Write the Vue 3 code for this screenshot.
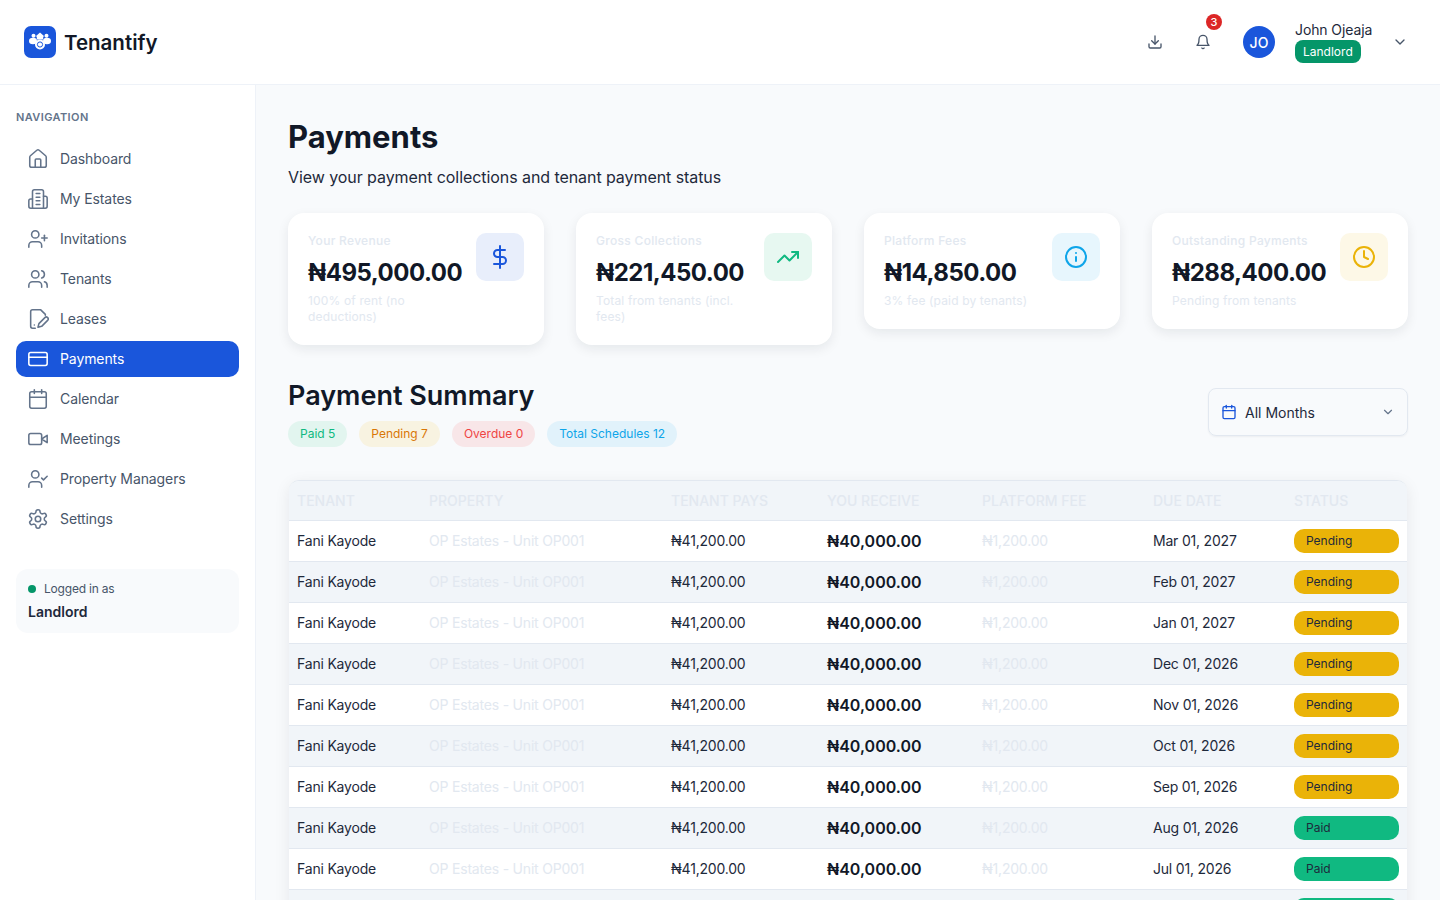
<script setup>
const c = (x, y, r) => `M${x - r} ${y}a${r} ${r} 0 1 0 ${2 * r} 0a${r} ${r} 0 1 0 ${-2 * r} 0`
const person = 'M16 21v-2a4 4 0 0 0-4-4H6a4 4 0 0 0-4 4v2'
const icons = {
  home: ['M15 21v-8a1 1 0 0 0-1-1h-4a1 1 0 0 0-1 1v8', 'M3 10a2 2 0 0 1 .709-1.528l7-5.999a2 2 0 0 1 2.582 0l7 5.999A2 2 0 0 1 21 10v9a2 2 0 0 1-2 2H5a2 2 0 0 1-2-2z'],
  building: ['M6 22V4a2 2 0 0 1 2-2h8a2 2 0 0 1 2 2v18Z', 'M6 12H4a2 2 0 0 0-2 2v6a2 2 0 0 0 2 2h2', 'M18 9h2a2 2 0 0 1 2 2v9a2 2 0 0 1-2 2h-2', 'M10 6h4', 'M10 10h4', 'M10 14h4', 'M10 18h4'],
  userPlus: [person, c(9, 7, 4), 'M19 8v6', 'M22 11h-6'],
  users: [person, c(9, 7, 4), 'M22 21v-2a4 4 0 0 0-3-3.87', 'M16 3.13a4 4 0 0 1 0 7.75'],
  file: ['M9 22H6a2 2 0 0 1-2-2V4a2 2 0 0 1 2-2h9l5 5v1', 'M8 18.500h.01', 'M19.500 10.500a2 2 0 0 1 3 3L16 20l-4 1 1-4z'],
  card: ['M4 5h16a2 2 0 0 1 2 2v10a2 2 0 0 1-2 2H4a2 2 0 0 1-2-2V7a2 2 0 0 1 2-2z', 'M2 10h20'],
  calendar: ['M5 4h14a2 2 0 0 1 2 2v14a2 2 0 0 1-2 2H5a2 2 0 0 1-2-2V6a2 2 0 0 1 2-2z', 'M16 2v4', 'M8 2v4', 'M3 10h18'],
  video: ['m22 8-6 4 6 4V8Z', 'M4 6h10a2 2 0 0 1 2 2v8a2 2 0 0 1-2 2H4a2 2 0 0 1-2-2V8a2 2 0 0 1 2-2z'],
  userCheck: [person, c(9, 7, 4), 'M16 11l2 2 4-4'],
  settings: ['M12.22 2h-.44a2 2 0 0 0-2 2v.18a2 2 0 0 1-1 1.73l-.43.25a2 2 0 0 1-2 0l-.15-.08a2 2 0 0 0-2.73.73l-.22.38a2 2 0 0 0 .73 2.73l.15.1a2 2 0 0 1 1 1.72v.51a2 2 0 0 1-1 1.74l-.15.09a2 2 0 0 0-.73 2.73l.22.38a2 2 0 0 0 2.73.73l.15-.08a2 2 0 0 1 2 0l.43.25a2 2 0 0 1 1 1.73V20a2 2 0 0 0 2 2h.44a2 2 0 0 0 2-2v-.18a2 2 0 0 1 1-1.73l.43-.25a2 2 0 0 1 2 0l.15.08a2 2 0 0 0 2.73-.73l.22-.39a2 2 0 0 0-.73-2.73l-.15-.08a2 2 0 0 1-1-1.74v-.5a2 2 0 0 1 1-1.74l.15-.09a2 2 0 0 0 .73-2.73l-.22-.38a2 2 0 0 0-2.73-.73l-.15.08a2 2 0 0 1-2 0l-.43-.25a2 2 0 0 1-1-1.73V4a2 2 0 0 0-2-2z', c(12, 12, 3)],
  download: ['M21 15v4a2 2 0 0 1-2 2H5a2 2 0 0 1-2-2v-4', 'M7 10l5 5 5-5', 'M12 15V3'],
  bell: ['M6 8a6 6 0 0 1 12 0c0 7 3 9 3 9H3s3-2 3-9', 'M10.3 21a1.94 1.94 0 0 0 3.4 0'],
  chevron: ['m6 9 6 6 6-6'],
  dollar: ['M12 1v22', 'M17 5H9.5a3.5 3.5 0 0 0 0 7h5a3.5 3.5 0 0 1 0 7H6'],
  trend: ['M22 7l-8.5 8.5-5-5L2 17', 'M16 7h6v6'],
  info: [c(12, 12, 10), 'M12 16v-4', 'M12 8h.01'],
  clock: [c(12, 12, 10), 'M12 6v6l4 2']
}
const nav = [
  ['Dashboard', 'home'], ['My Estates', 'building'], ['Invitations', 'userPlus'], ['Tenants', 'users'], ['Leases', 'file'],
  ['Payments', 'card', true], ['Calendar', 'calendar'], ['Meetings', 'video'], ['Property Managers', 'userCheck'], ['Settings', 'settings']
]
const cards = [
  { t: 'Your Revenue', v: '₦495,000.00', s: '100% of rent (no deductions)', i: 'dollar', k: 'blue' },
  { t: 'Gross Collections', v: '₦221,450.00', s: 'Total from tenants (incl. fees)', i: 'trend', k: 'green' },
  { t: 'Platform Fees', v: '₦14,850.00', s: '3% fee (paid by tenants)', i: 'info', k: 'sky' },
  { t: 'Outstanding Payments', v: '₦288,400.00', s: 'Pending from tenants', i: 'clock', k: 'amber' }
]
const chips = [['Paid 5', 'paid'], ['Pending 7', 'pending'], ['Overdue 0', 'overdue'], ['Total Schedules 12', 'total']]
const heads = ['Tenant', 'Property', 'Tenant Pays', 'You Receive', 'Platform Fee', 'Due Date', 'Status']
const rows = [
  ['Mar 01, 2027', 'Pending'], ['Feb 01, 2027', 'Pending'], ['Jan 01, 2027', 'Pending'], ['Dec 01, 2026', 'Pending'],
  ['Nov 01, 2026', 'Pending'], ['Oct 01, 2026', 'Pending'], ['Sep 01, 2026', 'Pending'], ['Aug 01, 2026', 'Paid'],
  ['Jul 01, 2026', 'Paid'], ['Jun 01, 2026', 'Paid']
]
</script>

<template>
  <div class="app">
    <header class="topbar">
      <div class="brand">
        <svg class="logo" viewBox="0 0 32 32">
          <rect width="32" height="32" rx="7" fill="#1a56db" />
          <g fill="#fff">
            <path d="M16 6.500l4.500 4h-1.300v3h-6.400v-3h-1.300z" />
            <circle cx="9.500" cy="9.800" r="2" />
            <circle cx="22.500" cy="9.800" r="2" />
            <ellipse cx="9" cy="15" rx="4" ry="3.200" />
            <ellipse cx="23" cy="15" rx="4" ry="3.200" />
            <circle cx="16" cy="18.500" r="5" />
          </g>
          <circle cx="16" cy="18.500" r="2.600" fill="none" stroke="#1a56db" stroke-width="1" />
        </svg>
        <span class="brand-name">Tenantify</span>
      </div>
      <div class="actions">
        <svg class="ic top-ic" viewBox="0 0 24 24"><path v-for="d in icons.download" :key="d" :d="d" /></svg>
        <div class="bell">
          <svg class="ic top-ic" viewBox="0 0 24 24"><path v-for="d in icons.bell" :key="d" :d="d" /></svg>
          <span class="badge">3</span>
        </div>
        <div class="avatar">JO</div>
        <div class="who">
          <div class="who-name">John Ojeaja</div>
          <div class="role">Landlord</div>
        </div>
        <svg class="ic top-ic chev" viewBox="0 0 24 24"><path v-for="d in icons.chevron" :key="d" :d="d" /></svg>
      </div>
    </header>

    <div class="body">
      <aside class="sidebar">
        <div class="nav-title">NAVIGATION</div>
        <nav class="nav">
          <a v-for="n in nav" :key="n[0]" class="nav-item" :class="{ active: n[2] }">
            <svg class="ic nav-ic" viewBox="0 0 24 24"><path v-for="d in icons[n[1]]" :key="d" :d="d" /></svg>
            <span>{{ n[0] }}</span>
          </a>
        </nav>
        <div class="login">
          <div class="login-top"><i class="dot"></i>Logged in as</div>
          <div class="login-role">Landlord</div>
        </div>
      </aside>

      <main class="main">
        <h1>Payments</h1>
        <p class="sub">View your payment collections and tenant payment status</p>

        <section class="cards">
          <article v-for="x in cards" :key="x.t" class="card">
            <div class="card-text">
              <div class="card-title">{{ x.t }}</div>
              <div class="card-value">{{ x.v }}</div>
              <div class="card-sub">{{ x.s }}</div>
            </div>
            <div class="card-icon" :class="x.k">
              <svg class="ic" viewBox="0 0 24 24"><path v-for="d in icons[x.i]" :key="d" :d="d" /></svg>
            </div>
          </article>
        </section>

        <section class="summary">
          <div>
            <h2>Payment Summary</h2>
            <div class="chips">
              <span v-for="ch in chips" :key="ch[0]" class="chip" :class="ch[1]">{{ ch[0] }}</span>
            </div>
          </div>
          <div class="select">
            <svg class="ic sel-cal" viewBox="0 0 24 24"><path v-for="d in icons.calendar" :key="d" :d="d" /></svg>
            <span class="sel-text">All Months</span>
            <svg class="ic sel-chev" viewBox="0 0 24 24"><path v-for="d in icons.chevron" :key="d" :d="d" /></svg>
          </div>
        </section>

        <div class="table-wrap">
          <table>
            <colgroup>
              <col class="c1" /><col class="c2" /><col class="c3" /><col class="c4" /><col class="c5" /><col class="c6" /><col class="c7" />
            </colgroup>
            <thead>
              <tr><th v-for="h in heads" :key="h">{{ h }}</th></tr>
            </thead>
            <tbody>
              <tr v-for="r in rows" :key="r[0]">
                <td class="dark">Fani Kayode</td>
                <td class="faint">OP Estates - Unit OP001</td>
                <td class="dark">₦41,200.00</td>
                <td class="receive">₦40,000.00</td>
                <td class="faint">₦1,200.00</td>
                <td class="dark">{{ r[0] }}</td>
                <td><span class="status" :class="r[1].toLowerCase()">{{ r[1] }}</span></td>
              </tr>
            </tbody>
          </table>
        </div>
      </main>
    </div>
  </div>
</template>

<style>
html, body { margin: 0; height: 100%; overflow: hidden; }
</style>

<style scoped>
.app {
  height: 100vh;
  display: flex;
  flex-direction: column;
  overflow: hidden;
  font-family: Inter, "Noto Sans", sans-serif;
  color: #0f172a;
  background: #f8fafc;
}
.ic { fill: none; stroke: currentColor; stroke-width: 2; stroke-linecap: round; stroke-linejoin: round; display: block; flex: none; }

.topbar {
  height: 84px;
  flex: none;
  display: flex;
  align-items: center;
  justify-content: space-between;
  padding: 0 32px 0 24px;
  background: #fff;
  border-bottom: 1px solid #eef2f8;
}
.brand { display: flex; align-items: center; gap: 8px; }
.logo { width: 32px; height: 32px; display: block; }
.brand-name { font-size: 20.500px; font-weight: 600; color: #111827; }
.actions { display: flex; align-items: center; }
.top-ic { width: 16px; height: 16px; color: #475569; stroke-width: 2; }
.bell { position: relative; margin-left: 32px; }
.badge {
  position: absolute;
  top: -20px;
  left: 11px;
  width: 16px;
  height: 16px;
  border-radius: 50%;
  background: #dc2626;
  color: #fff;
  font-size: 11px;
  font-weight: 500;
  display: flex;
  align-items: center;
  justify-content: center;
}
.avatar {
  margin-left: 32px;
  width: 32px;
  height: 32px;
  border-radius: 50%;
  background: #1a56db;
  color: #fff;
  font-size: 14px;
  font-weight: 500;
  display: flex;
  align-items: center;
  justify-content: center;
}
.who { margin-left: 20px; width: 92px; }
.who-name { font-size: 14px; line-height: 18px; color: #1e293b; letter-spacing: -0.1px; }
.role {
  display: inline-block;
  margin-top: 1px;
  padding: 0 8px;
  height: 23px;
  line-height: 23px;
  border-radius: 8px;
  background: #059669;
  color: #fff;
  font-size: 12px;
}
.chev { margin-left: 5px; }

.body { flex: 1; min-height: 0; display: flex; }
.sidebar {
  width: 256px;
  flex: none;
  box-sizing: border-box;
  padding: 24px 16px;
  background: #fff;
  border-right: 1px solid #eef2f8;
}
.nav-title { font-size: 11px; line-height: 16px; font-weight: 600; letter-spacing: 0.4px; color: #64748b; }
.nav { margin-top: 16px; display: flex; flex-direction: column; gap: 4px; }
.nav-item {
  height: 36px;
  display: flex;
  align-items: center;
  gap: 11px;
  padding: 0 11px;
  border-radius: 10px;
  font-size: 14px;
  line-height: 16px;
  letter-spacing: -0.1px;
  color: #475569;
}
.nav-item span { margin-bottom: 1px; }
.nav-item.active { background: #1a56db; color: #fff; }
.nav-ic { width: 22px; height: 22px; stroke-width: 1.700; color: #64748b; }
.active .nav-ic { color: #fff; }
.login {
  margin-top: 32px;
  padding: 12px;
  height: 64px;
  box-sizing: border-box;
  border-radius: 12px;
  background: #f8fafc;
}
.login-top { display: flex; align-items: center; gap: 8px; font-size: 12px; line-height: 16px; letter-spacing: -0.2px; color: #475569; }
.dot { width: 8px; height: 8px; border-radius: 50%; background: #059669; }
.login-role { margin-top: 6px; font-size: 14px; line-height: 18px; font-weight: 600; color: #1e293b; }

.main { flex: 1; min-width: 0; box-sizing: border-box; padding: 32px; overflow: hidden; }
h1 { margin: 0; font-size: 31px; line-height: 40px; font-weight: 700; color: #111827; }
.sub { margin: 10px 0 0; font-size: 16px; line-height: 20px; letter-spacing: -0.07px; color: #1e293b; }

.cards { margin-top: 26px; display: grid; grid-template-columns: repeat(4, 256px); gap: 32px; align-items: start; }
.card {
  box-sizing: border-box;
  padding: 20px;
  display: flex;
  justify-content: space-between;
  gap: 12px;
  background: #fff;
  border-radius: 16px;
  box-shadow: 0 4px 12px rgba(15, 23, 42, 0.08);
}
.card-text { flex: 1; min-width: 0; }
.card-title { font-size: 12px; line-height: 16px; letter-spacing: 0.3px; color: #e2e8f0; font-weight: 500; }
.card-value { margin-top: 8px; font-size: 24px; line-height: 32px; font-weight: 700; color: #111827; white-space: nowrap; letter-spacing: -0.5px; }
.card-sub { margin-top: 4px; font-size: 12px; line-height: 16px; letter-spacing: 0.15px; color: #e2e8f0; }
.card-icon { width: 48px; height: 48px; flex: none; border-radius: 10px; display: flex; align-items: center; justify-content: center; }
.card-icon .ic { width: 24px; height: 24px; }
.card-icon.blue { background: #e8eefb; color: #1a56db; }
.card-icon.green { background: #e7f8f1; color: #10b981; }
.card-icon.sky { background: #e7f6fd; color: #0ea5e9; }
.card-icon.amber { background: #fdf8e7; color: #eab308; }

.summary { margin-top: 33px; display: flex; justify-content: space-between; align-items: flex-start; }
h2 { margin: 0; font-size: 27px; line-height: 36px; font-weight: 600; color: #111827; }
.chips { margin-top: 7px; display: flex; gap: 12px; }
.chip { height: 26px; line-height: 26px; padding: 0 12px; border-radius: 13px; font-size: 12px; }
.chip.paid { background: #e2f5ef; color: #10b981; }
.chip.pending { background: #f8f3e1; color: #d97706; }
.chip.overdue { background: #f8e6e8; color: #ef4444; }
.chip.total { background: #e1f2fb; color: #0ea5e9; }
.select {
  margin-top: 10px;
  width: 200px;
  height: 48px;
  box-sizing: border-box;
  padding: 0 12px;
  display: flex;
  align-items: center;
  border: 1px solid #e2e8f0;
  border-radius: 8px;
  box-shadow: 0 1px 2px rgba(15, 23, 42, 0.05);
}
.sel-cal { width: 16px; height: 16px; color: #1a56db; }
.sel-text { margin-left: 8px; flex: 1; font-size: 14px; color: #1e293b; }
.sel-chev { width: 14px; height: 14px; color: #64748b; }

.table-wrap {
  margin-top: 33px;
  margin-left: 1px;
  margin-right: 1px;
  border-top: 1px solid #e2e8f0;
  border-radius: 10px 10px 0 0;
  box-shadow: 0 4px 16px rgba(15, 23, 42, 0.08);
  overflow: hidden;
}
table { width: 100%; border-collapse: collapse; table-layout: fixed; }
.c1 { width: 132px; } .c2 { width: 242px; } .c3 { width: 156px; } .c4 { width: 155px; }
.c5 { width: 171px; } .c6 { width: 141px; } .c7 { width: 121px; }
th {
  height: 39px;
  padding: 0 8px;
  text-align: left;
  text-transform: uppercase;
  font-size: 14px;
  font-weight: 500;
  color: #e2e8f0;
  background: #f1f5f9;
}
td { height: 40px; padding: 0 8px; font-size: 14px; letter-spacing: -0.2px; border-top: 1px solid #e2e8f0; background: #fff; white-space: nowrap; }
tr:nth-child(even) td { background: #f1f5f9; }
td.dark, td.faint { height: 38px; padding-bottom: 2px; }
.dark { color: #1e293b; }
.faint { color: #e2e8f0; }
td.receive { font-size: 16px; font-weight: 600; letter-spacing: 0; color: #111827; }
.status {
  display: block;
  height: 24px;
  line-height: 24px;
  padding: 0 12px;
  border-radius: 10px;
  font-size: 12px;
  letter-spacing: 0;
  color: #1e293b;
}
.status.pending { background: #eab308; }
.status.paid { background: #10b981; }
</style>
